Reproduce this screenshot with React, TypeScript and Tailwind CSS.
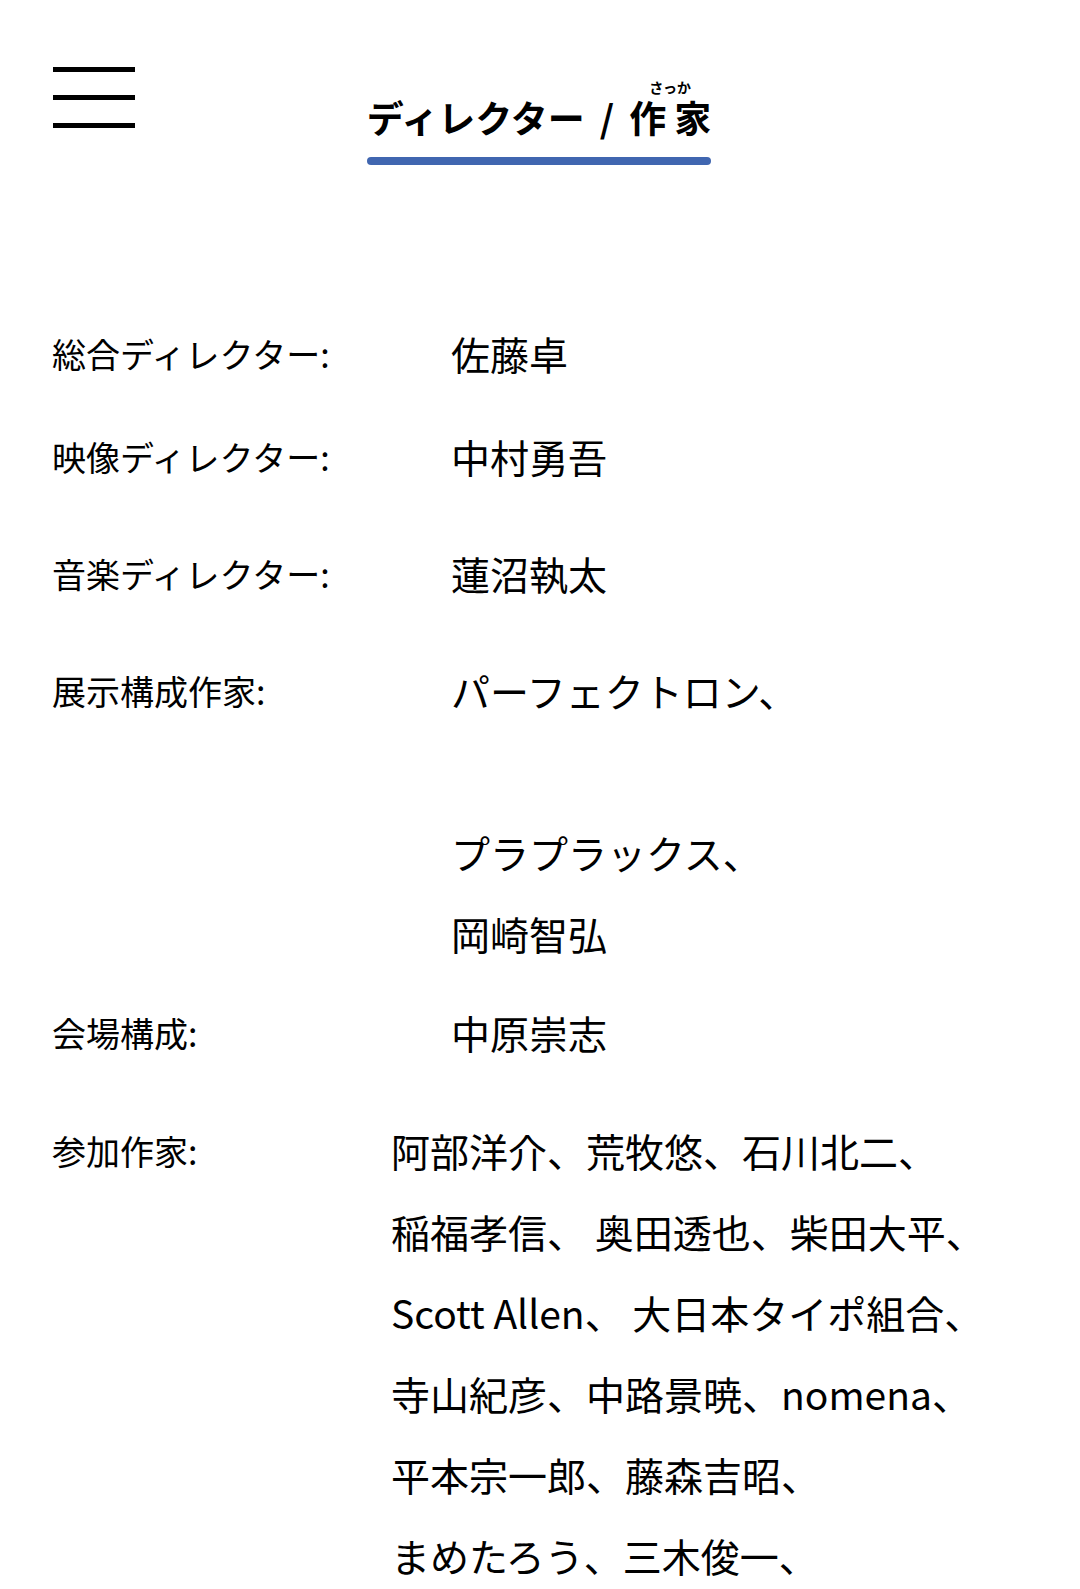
import React from 'react';

type Credit = { label: string; lines: string[]; gap: string; labelWidth: string };

const credits: Credit[] = [
  { label: '総合ディレクター:', lines: ['佐藤卓'], gap: 'mt-0', labelWidth: 'w-[399px]' },
  { label: '映像ディレクター:', lines: ['中村勇吾'], gap: 'mt-[22px]', labelWidth: 'w-[399px]' },
  { label: '音楽ディレクター:', lines: ['蓮沼執太'], gap: 'mt-[36px]', labelWidth: 'w-[399px]' },
  {
    label: '展示構成作家:',
    lines: ['パーフェクトロン、', '', 'プラプラックス、', '岡崎智弘'],
    gap: 'mt-[36px]',
    labelWidth: 'w-[399px]',
  },
  { label: '会場構成:', lines: ['中原崇志'], gap: 'mt-[18px]', labelWidth: 'w-[399px]' },
  {
    label: '参加作家:',
    lines: [
      '阿部洋介、荒牧悠、石川北二、',
      '稲福孝信、 奥田透也、柴田大平、',
      'Scott Allen、 大日本タイポ組合、',
      '寺山紀彦、中路景暁、nomena、',
      '平本宗一郎、藤森吉昭、',
      'まめたろう、三木俊一、',
    ],
    gap: 'mt-[37px]',
    labelWidth: 'w-[339px]',
  },
];

function MenuButton() {
  return (
    <button className="absolute left-[53px] top-[67px] flex w-[82px] flex-col gap-[23px]" aria-label="menu">
      <span className="block h-[5px] w-full bg-black" />
      <span className="block h-[5px] w-full bg-black" />
      <span className="block h-[5px] w-full bg-black" />
    </button>
  );
}

function CreditRow({ credit }: { credit: Credit }) {
  return (
    <div className={`flex ${credit.gap}`}>
      <div className={`${credit.labelWidth} shrink-0 text-[34px] leading-[81px]`}>{credit.label}</div>
      <div className="text-[39px] leading-[81px] whitespace-pre">
        {credit.lines.map((line, i) => (
          <div key={i} className="h-[81px]">{line}</div>
        ))}
      </div>
    </div>
  );
}

export default function App() {
  return (
    <div className="min-h-[1589px] bg-white text-black" style={{ fontFamily: '"Noto Sans CJK JP", "Noto Sans", sans-serif' }}>
      <header className="relative pt-[85px]">
        <MenuButton />
        <div className="flex justify-center pr-[2px]">
          <div className="inline-flex flex-col items-stretch">
            <h1 className="whitespace-nowrap text-[37px] font-bold leading-[44px]">
              ディレクター<span className="mx-[15px]">/</span>
              <ruby className="[ruby-align:center]">
                作<span className="ml-[8px]">家</span>
                <rt className="relative -top-[5px] text-[14px] font-bold tracking-normal [ruby-align:center]">さっか</rt>
              </ruby>
            </h1>
            <div className="mt-[18px] h-[8px] rounded-full bg-[#4066b0]" />
          </div>
        </div>
      </header>

      <main className="mt-[148px] pl-[52px]">
        {credits.map((c) => (
          <CreditRow key={c.label} credit={c} />
        ))}
      </main>
    </div>
  );
}
